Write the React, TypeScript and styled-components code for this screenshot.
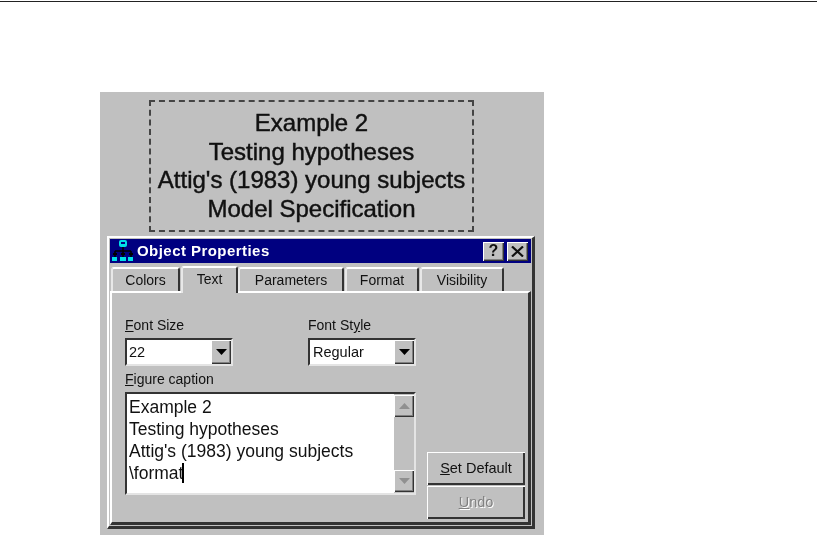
import React, {FC} from 'react';
import styled, {createGlobalStyle} from "styled-components";

const GlobalStyle = createGlobalStyle`
  html, body {
    margin: 0;
    background: #fff;
  }
  body {
    font-family: "Liberation Sans", Arial, sans-serif;
    color: #111;
  }
`;

const Page = styled.div`
  width: 817px;
  height: 535px;
  overflow: hidden;
  filter: blur(0.45px);
`;

const TopRule = styled.div`
  height: 1px;
  margin-top: 1px;
  background: #222;
`;

const Canvas = styled.div`
  width: 444px;
  height: 443px;
  margin: 90px 0 0 100px;
  padding: 8px 0 0 49px;
  box-sizing: border-box;
  background: #c0c0c0;
`;

const Caption = styled.div`
  width: 325px;
  height: 132px;
  box-sizing: border-box;
  padding-top: 7px;
  border: 2px dashed #444;
  font-size: 24px;
  line-height: 28.7px;
  text-align: center;
  -webkit-text-stroke: 0.45px #111;
`;

const Dialog = styled.div`
  width: 428px;
  height: 293px;
  margin: 4px 0 0 -42px;
  padding: 1px;
  box-sizing: border-box;
  background: #c0c0c0;
  border-top: 2px solid #fff;
  border-left: 2px solid #fff;
  border-right: 3px solid #333;
  border-bottom: 3px solid #333;
  display: flex;
  flex-direction: column;
`;

const TitleBar = styled.div`
  height: 24px;
  flex: none;
  background: #000080;
  display: flex;
  align-items: center;
  padding: 0 3px 0 2px;
  gap: 3px;
`;

const TitleText = styled.span`
  flex: 1;
  padding-bottom: 1px;
  color: #fff;
  font-size: 15px;
  font-weight: bold;
  letter-spacing: 0.45px;
`;

const TitleButton = styled.button`
  width: 21px;
  height: 19px;
  padding: 0;
  border: none;
  background: #c0c0c0;
  box-shadow: inset 1px 1px 0 #fff, inset -1px -1px 0 #333, inset -2px -2px 0 #808080;
  color: #111;
  font-family: inherit;
  font-size: 16px;
  font-weight: bold;
  display: flex;
  align-items: center;
  justify-content: center;
`;

const TabRow = styled.div`
  height: 28px;
  flex: none;
  display: flex;
  align-items: flex-end;
  padding-left: 1px;
`;

const Tab = styled.div<{$active?: boolean; $width: number}>`
  width: ${p => p.$width}px;
  height: ${p => (p.$active ? 27 : 24)}px;
  box-sizing: border-box;
  margin-right: ${p => (p.$active ? 0 : 1)}px;
  border-top: 2px solid #fff;
  border-left: 2px solid #e8e8e8;
  border-right: 2px solid #333;
  border-radius: 3px 3px 0 0;
  display: flex;
  align-items: center;
  justify-content: center;
  font-size: 14px;
  position: relative;
  z-index: ${p => (p.$active ? 1 : 0)};
  ${p => p.$active && "margin-bottom: -2px; padding-bottom: 3px; background: #c0c0c0;"}
`;

const Body = styled.div`
  flex: 1;
  box-sizing: border-box;
  border-top: 2px solid #fff;
  border-left: 2px solid #fff;
  border-right: 3px solid #333;
  border-bottom: 3px solid #333;
  padding: 25px 3px 3px 13px;
  display: grid;
  grid-template-columns: 291px 1fr;
  column-gap: 11px;
`;

const Form = styled.div`
  display: flex;
  flex-direction: column;
`;

const SelectRow = styled.div`
  display: grid;
  grid-template-columns: 108px 108px;
  column-gap: 75px;
  margin-bottom: 6px;
`;

const Field = styled.div`
  display: flex;
  flex-direction: column;
`;

const Label = styled.label`
  height: 20px;
  font-size: 14px;
  line-height: 15px;
`;

const Sunken = styled.div`
  box-sizing: border-box;
  background: #fff;
  border-top: 2px solid #333;
  border-left: 2px solid #333;
  border-right: 2px solid #e4e4e4;
  border-bottom: 2px solid #e4e4e4;
`;

const Select = styled(Sunken)`
  height: 28px;
  display: flex;
  align-items: center;
  font-size: 14.5px;
`;

const SelectValue = styled.span<{$indent: number}>`
  flex: 1;
  padding-left: ${p => p.$indent}px;
`;

const ArrowButton = styled.div`
  width: 20px;
  height: 24px;
  flex: none;
  background: #c0c0c0;
  box-shadow: inset 1px 1px 0 #fff, inset -1px -1px 0 #333, inset -2px -2px 0 #808080;
  display: flex;
  align-items: center;
  justify-content: center;
`;

const ScrollButton = styled(ArrowButton)`
  height: 22px;
`;

const TextArea = styled(Sunken)`
  height: 103px;
  display: flex;
  justify-content: space-between;
`;

const TextLines = styled.div`
  padding: 2px 0 0 2px;
  font-size: 17.5px;
  line-height: 22px;
`;

const Cursor = styled.span`
  display: inline-block;
  width: 2px;
  height: 20px;
  margin-left: -1px;
  background: #000;
  vertical-align: -4px;
`;

const ScrollBar = styled.div`
  width: 20px;
  flex: none;
  padding: 1px 0;
  background: #c0c0c0;
  display: flex;
  flex-direction: column;
  justify-content: space-between;
`;

const ButtonColumn = styled.div`
  display: flex;
  flex-direction: column;
  justify-content: flex-end;
  gap: 1px;
`;

const PushButton = styled.button<{$disabled?: boolean}>`
  width: 98px;
  height: 33px;
  padding: 0 0 2px;
  border: none;
  background: #c0c0c0;
  box-shadow: inset 1px 1px 0 #fff, inset -2px -2px 0 #333;
  font-family: inherit;
  font-size: 14.5px;
  color: ${p => (p.$disabled ? "#808080" : "#111")};
  text-shadow: ${p => (p.$disabled ? "1px 1px 0 #fff" : "none")};
`;

const Triangle: FC<{up?: boolean; color?: string}> = ({up, color = "#000"}) => (
    <svg width="11" height="6" viewBox="0 0 11 6">
        <path d={up ? "M5.5 0 L11 6 L0 6 Z" : "M0 0 L11 0 L5.5 6 Z"} fill={color}/>
    </svg>
);

const CloseGlyph: FC = () => (
    <svg width="13" height="11" viewBox="0 0 13 11">
        <path d="M1 0.5 L12 10.5 M12 0.5 L1 10.5" stroke="#111" strokeWidth="2.2" fill="none"/>
    </svg>
);

// Little network diagram in the title bar
const AppIcon: FC = () => (
    <svg width="22" height="22" viewBox="0 0 22 22">
        <path d="M11 7V17M3 11H19M3 11V17M19 11V17" stroke="#000" strokeWidth="1.6" fill="none"/>
        <rect x="1" y="13" width="4" height="2" fill="#000"/>
        <rect x="9" y="13" width="4" height="2" fill="#000"/>
        <rect x="17" y="13" width="4" height="2" fill="#000"/>
        <rect x="7" y="0" width="8" height="7" rx="2" fill="#00e0e8"/>
        <rect x="9" y="2" width="4" height="2" fill="#000080"/>
        <rect x="0" y="17" width="5" height="4" fill="#00e0e8"/>
        <rect x="8" y="17" width="6" height="4" fill="#00e0e8"/>
        <rect x="16" y="17" width="5" height="4" fill="#00e0e8"/>
    </svg>
);

const App: FC = () => {
    return (
        <Page>
            <GlobalStyle/>
            <TopRule/>
            <Canvas>
                <Caption>
                    Example 2<br/>
                    Testing hypotheses<br/>
                    Attig's (1983) young subjects<br/>
                    Model Specification
                </Caption>
                <Dialog>
                    <TitleBar>
                        <AppIcon/>
                        <TitleText>Object Properties</TitleText>
                        <TitleButton>?</TitleButton>
                        <TitleButton><CloseGlyph/></TitleButton>
                    </TitleBar>
                    <TabRow>
                        <Tab $width={69}>Colors</Tab>
                        <Tab $width={57} $active>Text</Tab>
                        <Tab $width={106}>Parameters</Tab>
                        <Tab $width={74}>Format</Tab>
                        <Tab $width={84}>Visibility</Tab>
                    </TabRow>
                    <Body>
                        <Form>
                            <SelectRow>
                                <Field>
                                    <Label><u>F</u>ont Size</Label>
                                    <Select>
                                        <SelectValue $indent={2}>22</SelectValue>
                                        <ArrowButton><Triangle/></ArrowButton>
                                    </Select>
                                </Field>
                                <Field>
                                    <Label>Font St<u>y</u>le</Label>
                                    <Select>
                                        <SelectValue $indent={3}>Regular</SelectValue>
                                        <ArrowButton><Triangle/></ArrowButton>
                                    </Select>
                                </Field>
                            </SelectRow>
                            <Label><u>F</u>igure caption</Label>
                            <TextArea>
                                <TextLines>
                                    Example 2<br/>
                                    Testing hypotheses<br/>
                                    Attig's (1983) young subjects<br/>
                                    \format<Cursor/>
                                </TextLines>
                                <ScrollBar>
                                    <ScrollButton><Triangle up color="#909090"/></ScrollButton>
                                    <ScrollButton><Triangle color="#909090"/></ScrollButton>
                                </ScrollBar>
                            </TextArea>
                        </Form>
                        <ButtonColumn>
                            <PushButton><u>S</u>et Default</PushButton>
                            <PushButton $disabled><u>U</u>ndo</PushButton>
                        </ButtonColumn>
                    </Body>
                </Dialog>
            </Canvas>
        </Page>
    );
};

export default App;
